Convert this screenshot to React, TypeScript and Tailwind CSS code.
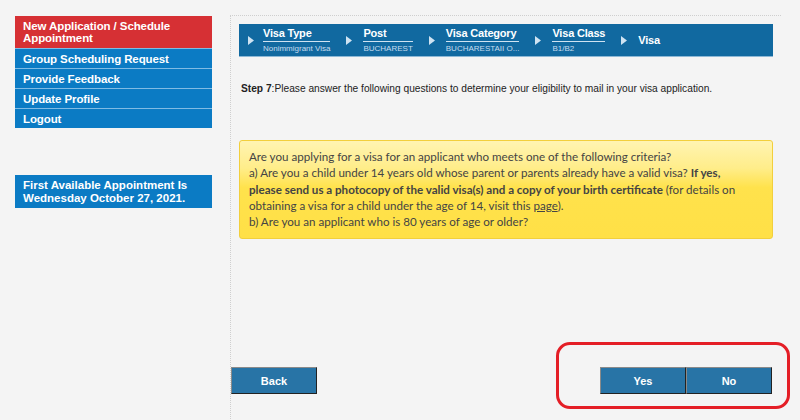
import React from 'react'

const MENU = [
  'Group Scheduling Request',
  'Provide Feedback',
  'Update Profile',
  'Logout',
]

const CRUMBS = [
  { t: 'Visa Type', s: 'Nonimmigrant Visa' },
  { t: 'Post', s: 'BUCHAREST' },
  { t: 'Visa Category', s: 'BUCHARESTAII O...' },
  { t: 'Visa Class', s: 'B1/B2' },
]

function Arrow() {
  return (
    <svg width="6" height="9" viewBox="0 0 6 9" className="shrink-0">
      <path d="M0 0 L6 4.5 L0 9 Z" fill="#cfe3f2" />
    </svg>
  )
}

function Btn({ children }: { children: React.ReactNode }) {
  return (
    <button className="h-[27px] w-[86px] border border-t-[#8a8a8a] border-l-[#8a8a8a] border-r-[#222] border-b-[#222] bg-[#2874a6] text-[11px] font-bold text-white">
      {children}
    </button>
  )
}

export default function App() {
  return (
    <div className="relative min-h-[420px] overflow-hidden bg-[#f4f4f4] font-['Liberation_Sans',Arial,sans-serif]">
      <div className="flex items-start gap-[18px] pl-[15px] pt-[16px]">
        <aside className="w-[197px] shrink-0">
          <nav className="text-[11.5px] font-bold leading-[12px] tracking-[-0.1px] text-white">
            <div className="bg-[#d63034] px-2 pb-[4px] pt-[4px]">
              New Application / Schedule
              <br />
              Appointment
            </div>
            {MENU.map((m) => (
              <div
                key={m}
                className="flex h-[20px] items-center border-t border-t-[#7fbbe4] bg-[#0b7bc4] px-2"
              >
                {m}
              </div>
            ))}
          </nav>

          <div className="mt-[47px] bg-[#0b7bc4] px-2 py-[4px] text-[11.5px] font-bold leading-[12.5px] text-white">
            First Available Appointment Is
            <br />
            Wednesday October 27, 2021.
          </div>
        </aside>

        <main className="-mt-px min-h-[420px] w-[551px] border-l border-t border-dotted border-[#cfcfcf] pt-[8px]">
          <div className="mx-2 flex h-[33px] items-center gap-[16px] border-b border-b-[#8db8d6] bg-[#1169a0] pl-[9px] text-white">
            {CRUMBS.map((c, i) => (
              <div key={c.t} className={'flex items-center ' + (i === 0 ? 'gap-[9px]' : 'gap-[11px]')}>
                <Arrow />
                <div className="flex flex-col">
                  <span className="border-b border-b-[#cfe3f2] pb-[1px] text-[11px] font-bold leading-[13px] tracking-[-0.2px]">
                    {c.t}
                  </span>
                  <span className="pt-[1px] text-[8px] leading-[11px] text-[#c5dcee]">{c.s}</span>
                </div>
              </div>
            ))}
            <div className="flex items-center gap-[11px]">
              <Arrow />
              <span className="text-[11px] font-bold tracking-[-0.2px]">Visa</span>
            </div>
          </div>

          <p className="ml-[10px] mt-[24px] text-[10.2px] leading-[15px] text-[#222]">
            <b>Step 7</b>:Please answer the following questions to determine your eligibility to mail in your visa application.
          </p>

          <div className="mx-2 mt-[44px] whitespace-nowrap rounded-[3px] border border-[#f2cf3c] bg-[linear-gradient(to_bottom,#fff4b2_0%,#ffed8a_28%,#ffe24c_48%,#ffe046_100%)] px-[9px] py-[8px] font-['Lato',sans-serif] text-[11.6px] leading-[16.3px] text-[#444]">
            Are you applying for a visa for an applicant who meets one of the following criteria?
            <br />
            a) Are you a child under 14 years old whose parent or parents already have a valid visa? <b>If yes,</b>
            <br />
            <b>please send us a photocopy of the valid visa(s) and a copy of your birth certificate</b> (for details on
            <br />
            obtaining a visa for a child under the age of 14, visit this <span className="underline">page</span>).
            <br />
            b) Are you an applicant who is 80 years of age or older?
          </div>

          <div className="mt-[128px] flex items-center justify-between pr-[9px]">
            <Btn>Back</Btn>
            <div className="flex">
              <Btn>Yes</Btn>
              <Btn>No</Btn>
            </div>
          </div>
        </main>
      </div>

      <div className="pointer-events-none absolute left-[556px] top-[342px] h-[67px] w-[234px] rounded-[14px] border-[3px] border-[#e41e26]" />
    </div>
  )
}
